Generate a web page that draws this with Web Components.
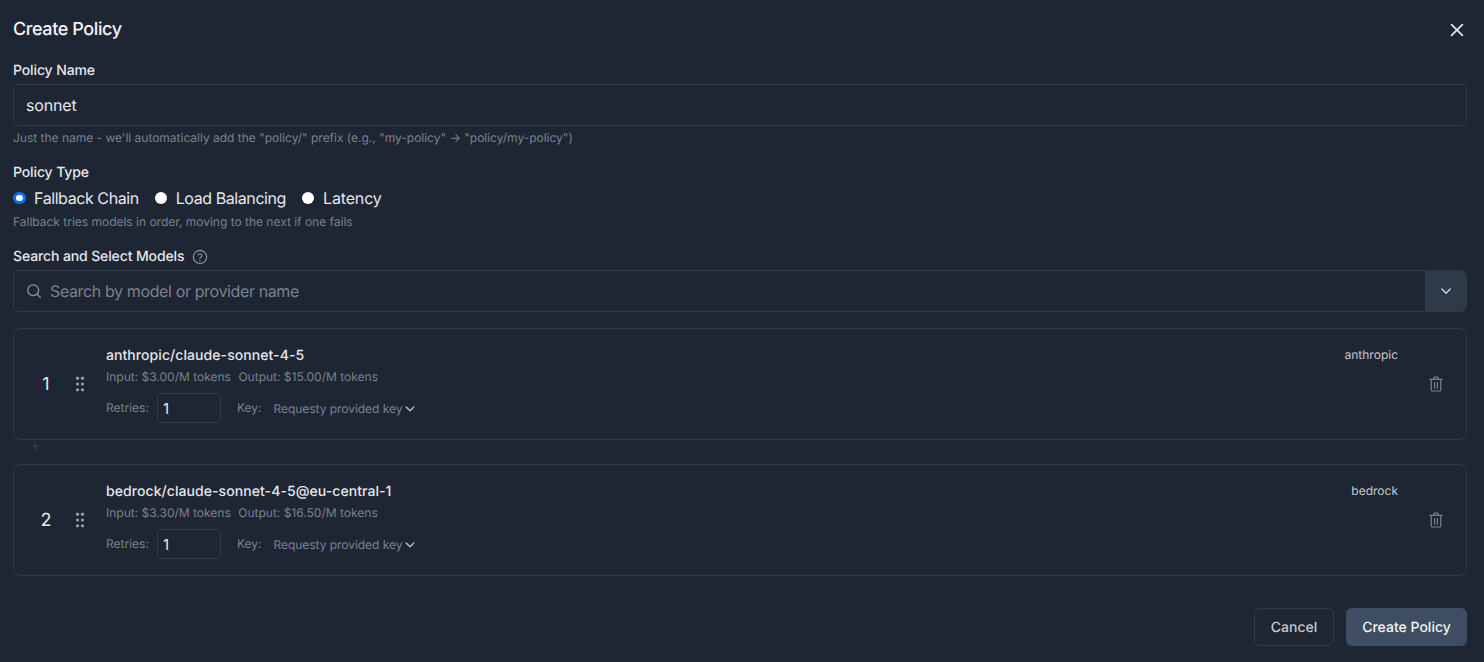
<!DOCTYPE html>
<html><head><meta charset="utf-8">
<style>
html,body{margin:0;padding:0;background:#1e2633;height:662px;overflow:hidden}
body{font-family:Inter,"Liberation Sans",sans-serif;color:#e5e7eb;text-rendering:geometricPrecision}
</style></head><body>
<policy-dialog>
  <model-card slot="models" index="1" name="anthropic/claude-sonnet-4-5" provider="anthropic" input="$3.00" output="$15.00"></model-card>
  <add-gap slot="models"></add-gap>
  <model-card slot="models" index="2" name="bedrock/claude-sonnet-4-5@eu-central-1" provider="bedrock" input="$3.30" output="$16.50"></model-card>
</policy-dialog>
<script>
class PolicyDialog extends HTMLElement{
  constructor(){super();this.attachShadow({mode:'open'}).innerHTML=`
<style>
:host{display:block;box-sizing:border-box;width:1484px;height:662px;padding:0 17px 0 13px;font-family:Inter,"Liberation Sans",sans-serif}
*{box-sizing:border-box}
header{display:flex;justify-content:space-between;align-items:center;height:60px;padding-bottom:1px}
h1{margin:1px 0 0;font-size:18px;line-height:24px;font-weight:450;letter-spacing:-.4px;color:#f3f4f6}
.close{display:flex;width:16px;height:16px;margin-right:2px;color:#e5e7eb}
label.f{display:block;height:20px;padding-top:1px;font-size:14px;line-height:20px;font-weight:450;letter-spacing:-.12px;color:#e5e7eb}
.input{height:42px;margin-top:4px;border:1px solid #2f3b49;border-radius:6px;padding:0 12px;display:flex;align-items:center;font-size:16px;letter-spacing:-.15px;color:#e5e7eb}
.hint{font-size:12px;line-height:16px;color:#7a818c;margin-top:4px;letter-spacing:-.01px}
.type{margin-top:16px}
.radios{display:flex;align-items:center;gap:16px;height:24px;margin-top:4px;font-size:16px;color:#e5e7eb}
.radio{display:flex;align-items:center;gap:8.5px;letter-spacing:-.42px}
.radio.l{letter-spacing:-.14px}
.dot{width:12.5px;height:12.5px;border-radius:50%;background:#fff}
.dot.on{background:#fff;border:3px solid #0b6ffb}
.search{margin-top:16px}
.srow{display:flex;align-items:center;gap:8px}
.srow svg{margin:1px 0 -1px}
.sbox{height:42px;margin-top:4px;border:1px solid #2f3b49;border-radius:6px;display:flex;align-items:center;overflow:hidden}
.sicon{display:flex;margin-left:12px;margin-right:8px;color:#8b93a0}
.ph{flex:1;font-size:16px;color:#7a818c;letter-spacing:-.375px}
.sbtn{width:42px;height:42px;background:#2f3a48;display:flex;align-items:center;justify-content:center;color:#d1d5db;margin-right:-1px}
.models{margin-top:16px}
footer{display:flex;justify-content:flex-end;gap:12px;margin-top:32px}
.btn{height:38px;border-radius:6px;font-size:14px;font-weight:450;display:flex;align-items:center;justify-content:center}
.cancel{width:80px;border:1px solid #2f3b49;color:#c5c9d0}
.create{width:121px;background:#3e4d62;color:#f3f4f6}
</style>
<header><h1>Create Policy</h1>
<span class="close"><svg width="16" height="16" viewBox="0 0 16 16" fill="none" stroke="currentColor" stroke-width="1.7" stroke-linecap="round"><path d="M2.6 2.6l10.8 10.8M13.4 2.6L2.6 13.4"/></svg></span></header>
<div class="name"><label class="f">Policy Name</label>
<div class="input">sonnet</div>
<div class="hint">Just the name - we'll automatically add the "policy/" prefix (e.g., "my-policy" → "policy/my-policy")</div></div>
<div class="type"><label class="f">Policy Type</label>
<div class="radios"><span class="radio"><span class="dot on"></span>Fallback Chain</span><span class="radio"><span class="dot"></span>Load Balancing</span><span class="radio l"><span class="dot"></span>Latency</span></div>
<div class="hint">Fallback tries models in order, moving to the next if one fails</div></div>
<div class="search"><div class="srow"><label class="f">Search and Select Models</label>
<svg width="16" height="16" viewBox="0 0 24 24" fill="none" stroke="#8b93a0" stroke-width="1.7" stroke-linecap="round"><circle cx="12" cy="12" r="10"/><path d="M9.1 9a3 3 0 0 1 5.8 1c0 2-3 2.6-3 4"/><path d="M12 17.5h.01" stroke-width="2.2"/></svg></div>
<div class="sbox"><span class="sicon"><svg width="16" height="16" viewBox="0 0 16 16" fill="none" stroke="currentColor" stroke-width="1.3" stroke-linecap="round"><circle cx="7.2" cy="7.2" r="5.4"/><path d="M11.2 11.2l3.2 3.2"/></svg></span><span class="ph">Search by model or provider name</span>
<span class="sbtn"><svg width="12" height="12" viewBox="0 0 12 12" fill="none" stroke="currentColor" stroke-width="1.4" stroke-linecap="round" stroke-linejoin="round"><path d="M1.8 4l4.2 4.2L10.2 4"/></svg></span></div></div>
<div class="models"><slot name="models"></slot></div>
<footer><span class="btn cancel">Cancel</span><span class="btn create">Create Policy</span></footer>`;}
}
class ModelCard extends HTMLElement{
  connectedCallback(){
    const g=n=>this.getAttribute(n);
    this.attachShadow({mode:'open'}).innerHTML=`
<style>
:host{display:block;font-family:Inter,"Liberation Sans",sans-serif}
*{box-sizing:border-box}
.card{height:112px;border:1px solid #2f3b49;border-radius:8px;display:flex;align-items:center;padding:0 22px 0 0}
.num{width:54px;text-align:right;padding-right:12px;font-size:18px;color:#e5e7eb}
.num span{display:inline-block;width:20px;text-align:center}
.grip{width:38px;display:flex;color:#98a0ac;padding-left:7px}
.body{flex:1;align-self:stretch;padding-top:17px;min-width:0}
.top{display:flex;justify-content:space-between;align-items:center;height:20px}
.mname{font-size:14px;line-height:20px;font-weight:500;letter-spacing:.07px;color:#e5e7eb}
.prov{font-size:12px;line-height:16px;color:#c5c9d0;margin:-2px 30px 0 0}
.price{font-size:12px;line-height:16px;color:#7a818c;margin-top:3px;display:flex;gap:7.5px}
.row{display:flex;align-items:center;margin-top:8px;font-size:12px;color:#7a818c;height:30px}
.lab{margin-bottom:2px}
.retry{width:64px;height:30px;margin-left:8px;border:1px solid #2f3b49;border-radius:4px;display:flex;align-items:center;padding-left:5px;font-size:15px;color:#e5e7eb}
.key{margin-left:16px}
.sel{margin-left:12px;display:flex;align-items:center;gap:3px;padding-top:1px;color:#7a818c;letter-spacing:-.04px}
.sel svg{color:#b0b6c0}
.trash{display:flex;color:#7a818c}
</style>
<div class="card"><span class="num"><span>${g('index')}</span></span>
<span class="grip"><svg width="10" height="16" viewBox="0 0 10 16" fill="currentColor"><circle cx="2.5" cy="2.2" r="1.6"/><circle cx="7.5" cy="2.2" r="1.6"/><circle cx="2.5" cy="8" r="1.6"/><circle cx="7.5" cy="8" r="1.6"/><circle cx="2.5" cy="13.8" r="1.6"/><circle cx="7.5" cy="13.8" r="1.6"/></svg></span>
<div class="body"><div class="top"><span class="mname">${g('name')}</span><span class="prov">${g('provider')}</span></div>
<div class="price"><span>Input: ${g('input')}/M tokens</span><span>Output: ${g('output')}/M tokens</span></div>
<div class="row"><span class="lab">Retries:</span><span class="retry">1</span><span class="key lab">Key:</span><span class="sel">Requesty provided key<svg width="10" height="10" viewBox="0 0 10 10" fill="none" stroke="currentColor" stroke-width="1.5" stroke-linecap="round" stroke-linejoin="round"><path d="M1.2 3l3.8 3.8L8.8 3"/></svg></span></div></div>
<span class="trash"><svg width="16" height="16" viewBox="0 0 16 16" fill="none" stroke="currentColor" stroke-width="1.2" stroke-linecap="round" stroke-linejoin="round"><path d="M1.8 3.4h12.4M5.8 3.2V1.8a.6.6 0 0 1 .6-.6h3.2a.6.6 0 0 1 .6.6v1.4M3.2 3.6v10.2a1.2 1.2 0 0 0 1.2 1.2h7.2a1.2 1.2 0 0 0 1.2-1.2V3.6M6.6 6.6v5.6M9.4 6.6v5.6"/></svg></span></div>`;
  }
}
class AddGap extends HTMLElement{
  constructor(){super();this.attachShadow({mode:'open'}).innerHTML=`
<style>:host{display:flex;box-sizing:border-box;height:24px;padding:1px 0 0 17px;font-family:Inter,sans-serif}svg{display:block}</style>
<svg width="10" height="10" viewBox="0 0 10 10" stroke="#39434f" stroke-width="1.2"><path d="M5 1v8M1 5h8"/></svg>`;}
}
customElements.define('policy-dialog',PolicyDialog);
customElements.define('model-card',ModelCard);
customElements.define('add-gap',AddGap);
</script>
</body></html>
